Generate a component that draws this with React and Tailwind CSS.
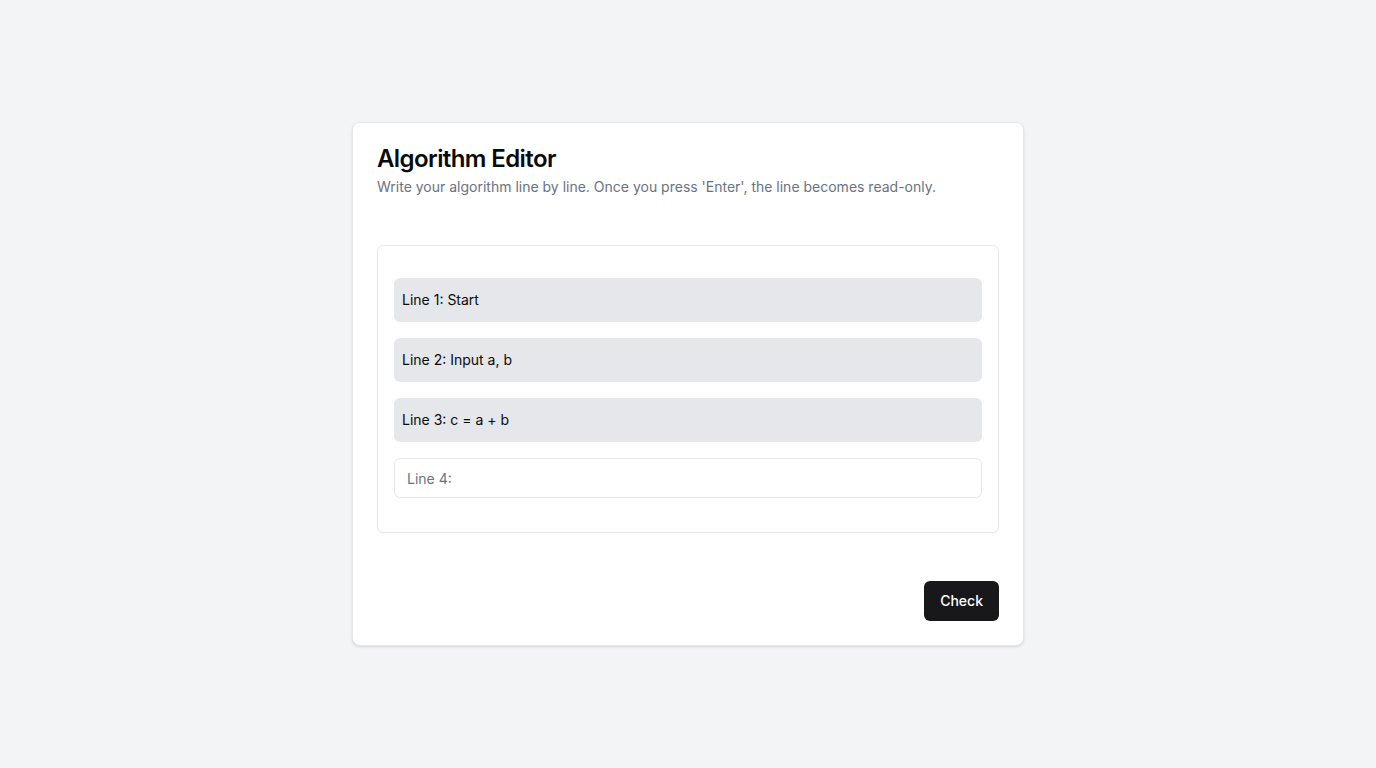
import React, { useState } from 'react';

export default function App() {
  const [lines, setLines] = useState(['Start', 'Input a, b', 'c = a + b']);
  const [draft, setDraft] = useState('');

  const handleKeyDown = (e) => {
    if (e.key === 'Enter' && draft.trim()) {
      setLines(prev => [...prev, draft.trim()]);
      setDraft('');
    }
  };

  return (
    <div
      className="min-h-screen bg-gray-100 flex items-center justify-center"
      style={{ fontFamily: 'Inter, "Liberation Sans", sans-serif' }}
    >
      <div className="w-[672px] bg-white border border-gray-200 rounded-lg shadow-sm">
        {/* Header */}
        <div className="p-6 pb-0 flex flex-col gap-1.5">
          <h1 className="text-2xl leading-6 font-semibold tracking-tight text-[#0a0a0a]">Algorithm Editor</h1>
          <p className="text-sm text-gray-500">
            Write your algorithm line by line. Once you press 'Enter', the line becomes read-only.
          </p>
        </div>

        {/* Lines */}
        <div className="px-6 pt-12">
          <div className="border border-gray-200 rounded-md px-4 pt-8 pb-[34px] flex flex-col gap-4">
            {lines.map((line, idx) => (
              <div key={idx} className="bg-gray-200 rounded-md px-2 py-3 text-sm leading-5 text-[#0a0a0a]">
                Line {idx + 1}: {line}
              </div>
            ))}
            <input
              value={draft}
              onChange={e => setDraft(e.target.value)}
              onKeyDown={handleKeyDown}
              placeholder={`Line ${lines.length + 1}:`}
              className="h-10 w-full border border-gray-200 rounded-md px-3 text-sm text-[#0a0a0a] placeholder:text-gray-500 outline-none"
            />
          </div>
        </div>

        {/* Footer */}
        <div className="px-6 pt-12 pb-6 flex justify-end">
          <button className="h-10 px-4 rounded-md bg-[#18181b] text-white text-sm font-medium">
            Check
          </button>
        </div>
      </div>
    </div>
  );
}
